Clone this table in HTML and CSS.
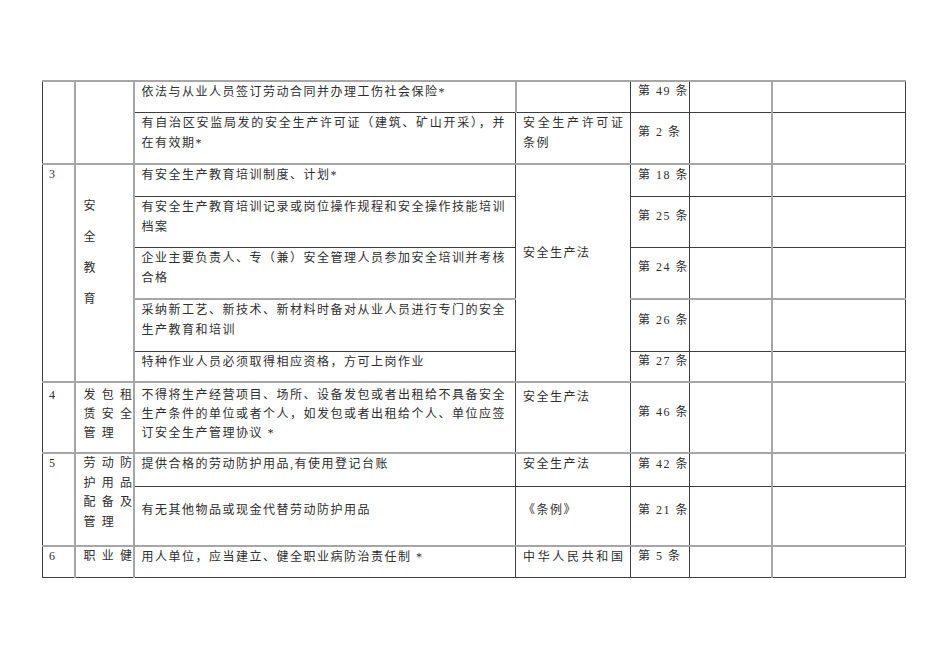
FILE: index.html
```html
<!DOCTYPE html>
<html lang="zh-CN">
<head>
<meta charset="utf-8">
<title>安全生产检查表</title>
<link rel="stylesheet" href="styles.css">
</head>
<body>
<table class="sheet">
  <colgroup>
    <col class="c-no"><col class="c-cat"><col class="c-item"><col class="c-law"><col class="c-art"><col class="c-a"><col class="c-b">
  </colgroup>
  <tr class="r31">
    <td rowspan="2" class="no gl"></td>
    <td rowspan="2" class="cat gl"></td>
    <td class="item gl">依法与从业人员签订劳动合同并办理工伤社会保险*</td>
    <td class="law"></td>
    <td class="art">第 49 条</td>
    <td class="gl"></td>
    <td></td>
  </tr>
  <tr class="r52">
    <td class="item"><span class="j">有自治区安监局发的安全生产许可证（建筑、矿山开采），并</span>在有效期*</td>
    <td class="law"><span class="jl">安全生产许可证</span>条例</td>
    <td class="art">第 2 条</td>
    <td class="gl"></td>
    <td></td>
  </tr>
  <tr class="r32 gt">
    <td rowspan="5" class="no gl">3</td>
    <td rowspan="5" class="cat vert gl">安<br>全<br>教<br>育</td>
    <td class="item">有安全生产教育培训制度、计划*</td>
    <td rowspan="5" class="law mid5">安全生产法</td>
    <td class="art">第 18 条</td>
    <td class="gl"></td>
    <td></td>
  </tr>
  <tr class="r51">
    <td class="item"><span class="j">有安全生产教育培训记录或岗位操作规程和安全操作技能培训</span>档案</td>
    <td class="art">第 25 条</td>
    <td class="gl"></td>
    <td></td>
  </tr>
  <tr class="r52">
    <td class="item"><span class="j">企业主要负责人、专（兼）安全管理人员参加安全培训并考核</span>合格</td>
    <td class="art">第 24 条</td>
    <td class="gl"></td>
    <td></td>
  </tr>
  <tr class="r52 gt">
    <td class="item"><span class="j">采纳新工艺、新技术、新材料时备对从业人员进行专门的安全</span>生产教育和培训</td>
    <td class="art">第 26 条</td>
    <td class="gl"></td>
    <td></td>
  </tr>
  <tr class="r31">
    <td class="item">特种作业人员必须取得相应资格，方可上岗作业</td>
    <td class="art">第 27 条</td>
    <td class="gl"></td>
    <td></td>
  </tr>
  <tr class="r71 gt row4">
    <td class="no gl">4</td>
    <td class="cat gl spaced">发包租<br>赁安全<br>管理</td>
    <td class="item"><span class="j">不得将生产经营项目、场所、设备发包或者出租给不具备安全</span><span class="j">生产条件的单位或者个人，如发包或者出租给个人、单位应签</span>订安全生产管理协议 *</td>
    <td class="law l4">安全生产法</td>
    <td class="art">第 46 条</td>
    <td class="gl"></td>
    <td></td>
  </tr>
  <tr class="r33 gt">
    <td rowspan="2" class="no gl">5</td>
    <td rowspan="2" class="cat gl spaced r5">劳动防<br>护用品<br>配备及<br>管理</td>
    <td class="item">提供合格的劳动防护用品,有使用登记台账</td>
    <td class="law">安全生产法</td>
    <td class="art">第 42 条</td>
    <td class="gl"></td>
    <td></td>
  </tr>
  <tr class="r60">
    <td class="item midc">有无其他物品或现金代替劳动防护用品</td>
    <td class="law midc">《条例》</td>
    <td class="art">第 21 条</td>
    <td class="gl"></td>
    <td></td>
  </tr>
  <tr class="r31 gt">
    <td class="no gl">6</td>
    <td class="cat gl spaced">职业健</td>
    <td class="item">用人单位，应当建立、健全职业病防治责任制 *</td>
    <td class="law"><span class="jl">中华人民共和国</span></td>
    <td class="art">第 5 条</td>
    <td class="gl"></td>
    <td></td>
  </tr>
</table>
</body>
</html>
```

FILE: styles.css
```css
html, body {
  margin: 0;
  padding: 0;
  background: #ffffff;
}

body {
  padding: 80px 0 0 42px;
  font-family: "Liberation Serif", "Noto Sans CJK SC", serif;
  font-size: 12px;
  color: #2e2e2e;
}

.sheet {
  border-collapse: collapse;
  table-layout: fixed;
  width: 864px;
  border-top: 2px solid #a6a6a6;
}

.c-no { width: 32px; }
.c-cat { width: 59px; }
.c-item { width: 382px; }
.c-law { width: 115px; }
.c-art { width: 59px; }
.c-a { width: 82px; }
.c-b { width: 134px; }

.sheet td {
  border: 1px solid #3d3d3d;
  vertical-align: top;
  padding: 0 7px;
  line-height: 19px;
  letter-spacing: 1.5px;
  white-space: nowrap;
  overflow: hidden;
}

.sheet td.gl {
  border-right: 2px solid #a6a6a6;
}

.sheet tr.gt td {
  border-top: 2px solid #a6a6a6;
}

.r31 { height: 31px; }
.r32 { height: 32px; }
.r33 { height: 33px; }
.r51 { height: 51px; }
.r52 { height: 52px; }
.r60 { height: 60px; }
.r71 { height: 71px; }

.sheet td.no {
  padding-left: 6px;
}

.sheet td.item {
  padding-right: 9px;
  line-height: 20px;
}

.sheet td.law {
  line-height: 20px;
}

.j {
  display: block;
  text-align: justify;
  text-align-last: justify;
}

.jl {
  display: block;
  text-align: justify;
  text-align-last: justify;
  margin-right: -1.5px;
}

.sheet td.art {
  vertical-align: middle;
  line-height: 14px;
  padding-bottom: 11px;
}

.sheet td.midc {
  vertical-align: middle;
  line-height: 14px;
  padding-bottom: 12px;
}

.sheet td.vert {
  padding-top: 26px;
  line-height: 31px;
  padding-left: 8px;
}

.sheet td.mid5 {
  padding-top: 78px;
}

.sheet td.spaced {
  letter-spacing: 6.3px;
  padding-left: 8px;
  padding-right: 0;
  overflow: visible;
}

.sheet .row4 td.item,
.sheet .row4 td.spaced,
.sheet .row4 td.no {
  padding-top: 3px;
  line-height: 19px;
}

.sheet .row4 td.l4 {
  padding-top: 5px;
  line-height: 19px;
}

.sheet td.r5 {
  line-height: 19.5px;
}
```
